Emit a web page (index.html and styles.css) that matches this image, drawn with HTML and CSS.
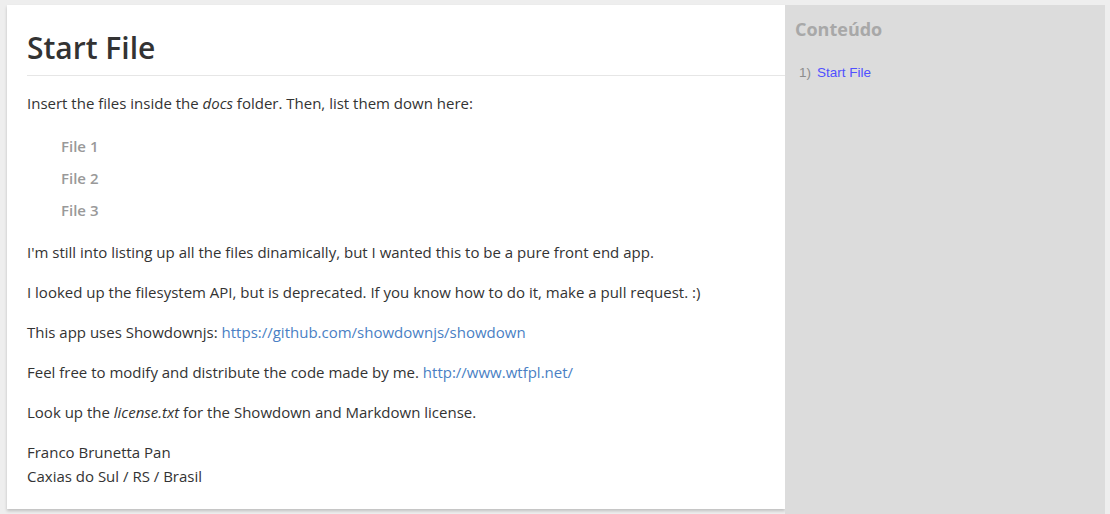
FILE: index.html
```html
<!DOCTYPE html>
<html>
<head>
<meta charset="utf-8">
<link rel="stylesheet" href="styles.css">
</head>
<body>
<div class="layout">
  <main class="card">
    <h1 class="title">Start File</h1>
    <p>Insert the files inside the <em>docs</em> folder. Then, list them down here:</p>
    <ul class="files">
      <li>File 1</li>
      <li>File 2</li>
      <li>File 3</li>
    </ul>
    <p>I'm still into listing up all the files dinamically, but I wanted this to be a pure front end app.</p>
    <p>I looked up the filesystem API, but is deprecated. If you know how to do it, make a pull request. :)</p>
    <p>This app uses Showdownjs: <a href="#">https://github.com/showdownjs/showdown</a></p>
    <p>Feel free to modify and distribute the code made by me. <a href="#">http://www.wtfpl.net/</a></p>
    <p>Look up the <em>license.txt</em> for the Showdown and Markdown license.</p>
    <p>Franco Brunetta Pan<br>Caxias do Sul / RS / Brasil</p>
  </main>
  <aside class="sidebar">
    <h2 class="side-title">Conteúdo</h2>
    <ol class="toc">
      <li><span class="num">1)</span><a href="#">Start File</a></li>
    </ol>
  </aside>
</div>
</body>
</html>
```
FILE: styles.css
```css
html, body {
  margin: 0;
  padding: 0;
  height: 100%;
}
body {
  background: #eeeeee;
  font-family: "Open Sans", "Noto Sans", sans-serif;
  color: #333333;
  overflow: hidden;
}
.layout {
  display: flex;
  align-items: flex-start;
  padding: 5px 5px 0 7px;
  height: 100%;
  box-sizing: border-box;
}
.card {
  width: 758px;
  background: #ffffff;
  padding: 16px 0 21px 20px;
  box-shadow: 0 2px 3px rgba(0, 0, 0, 0.2);
  font-size: 15px;
  line-height: 24px;
}
.title {
  margin: 0 0 15px 0;
  padding: 10px 0 10px 0;
  font-size: 30px;
  line-height: 34px;
  font-weight: 600;
  border-bottom: 1px solid #e6e6e6;
}
.card p {
  margin: 0 0 16px 0;
}
.card p:last-child {
  margin-bottom: 0;
}
.card a {
  color: #4a7fc4;
  text-decoration: none;
}
.files {
  list-style: none;
  margin: 0 0 18px 0;
  padding: 3px 0 0 34px;
}
.files li {
  font-weight: 600;
  color: #999999;
  margin-bottom: 8px;
}
.sidebar {
  width: 320px;
  align-self: stretch;
  background: #dcdcdc;
  padding: 12px 10px;
  box-sizing: border-box;
}
.side-title {
  margin: 0;
  font-size: 18px;
  line-height: 24px;
  font-weight: 700;
  color: #a8a8a8;
}
.toc {
  list-style: none;
  margin: 24px 0 0 0;
  padding: 0 0 0 4px;
  font-family: "Liberation Sans", Arial, sans-serif;
  font-size: 13.5px;
}
.toc .num {
  color: #8c8c8c;
  margin-right: 6px;
}
.toc a {
  color: #5050ff;
  text-decoration: none;
}
```
